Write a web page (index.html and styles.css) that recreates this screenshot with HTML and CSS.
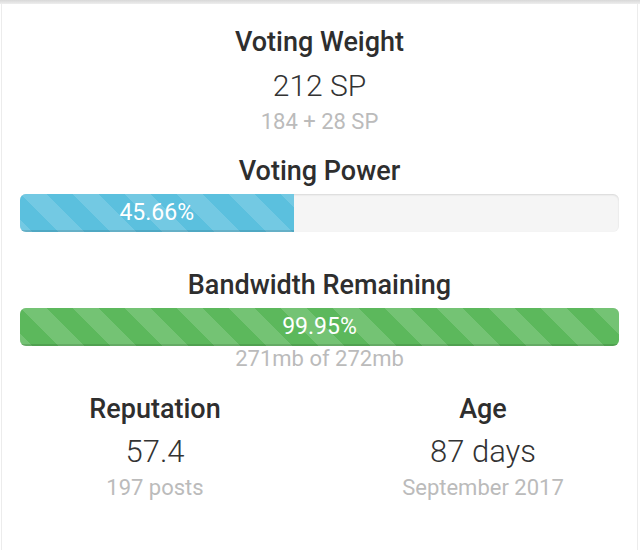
FILE: index.html
```html
<!DOCTYPE html>
<html>
<head>
<meta charset="utf-8">
<link rel="stylesheet" href="styles.css">
</head>
<body>
<div class="topbar"></div>
<div class="card">
  <div class="stat">
    <div class="label">Voting Weight</div>
    <div class="value">212 SP</div>
    <div class="sub">184 + 28 SP</div>
  </div>
  <div class="label label-vp">Voting Power</div>
  <div class="progress">
    <div class="bar bar-info" style="width:45.66%">45.66%</div>
  </div>
  <div class="label label-bw">Bandwidth Remaining</div>
  <div class="progress">
    <div class="bar bar-success" style="width:100%">99.95%</div>
  </div>
  <div class="sub sub-bw">271mb of 272mb</div>
  <div class="cols">
    <div class="col">
      <div class="label">Reputation</div>
      <div class="value">57.4</div>
      <div class="sub">197 posts</div>
    </div>
    <div class="col">
      <div class="label">Age</div>
      <div class="value">87 days</div>
      <div class="sub">September 2017</div>
    </div>
  </div>
</div>
</body>
</html>
```
FILE: styles.css
```css
html, body {
  margin: 0;
  padding: 0;
  background: #fff;
}
body {
  font-family: Roboto, "Liberation Sans", sans-serif;
  color: #333;
  width: 640px;
  height: 550px;
  overflow: hidden;
}
.topbar {
  height: 4px;
  background: linear-gradient(#d8d8d8, #eeeeee);
}
.card {
  box-sizing: border-box;
  height: 546px;
  margin: 0 2px 0 1px;
  border-left: 1px solid #ececec;
  border-right: 1px solid #ececec;
  padding: 0 18px 0 18px;
  text-align: center;
}
.stat {
  padding-top: 21px;
}
.label {
  font-size: 27px;
  font-weight: 500;
  line-height: 34px;
  color: #2e2e2e;
}
.value {
  font-size: 30px;
  font-weight: 300;
  line-height: 40px;
  margin-top: 7px;
  color: #333;
}
.sub {
  font-size: 22px;
  font-weight: 400;
  line-height: 26px;
  color: #bbb;
  margin-top: 3px;
}
.label-vp {
  margin-top: 19px;
}
.label-bw {
  margin-top: 36px;
}
.progress {
  height: 38px;
  margin-top: 6px;
  background: #f5f5f5;
  border-radius: 6px;
  box-shadow: inset 0 1px 2px rgba(0,0,0,0.12);
  overflow: hidden;
  display: flex;
}
.bar {
  height: 100%;
  color: #fff;
  font-size: 23px;
  line-height: 38px;
  text-align: center;
  box-shadow: inset 0 -2px 0 rgba(0,0,0,0.12);
  background-image: linear-gradient(45deg, rgba(255,255,255,0.15) 25%, transparent 25%, transparent 50%, rgba(255,255,255,0.15) 50%, rgba(255,255,255,0.15) 75%, transparent 75%, transparent);
  background-size: 52px 52px;
}
.bar-info {
  background-color: #5bc0de;
}
.bar-success {
  background-color: #5cb85c;
}
.sub-bw {
  margin-top: 0;
}
.cols {
  display: grid;
  grid-template-columns: 270px 270px;
  column-gap: 58px;
  margin-top: 20px;
}
.col .value {
  font-size: 31px;
  margin-top: 6px;
}
.col .sub {
  margin-top: 3px;
}
```
